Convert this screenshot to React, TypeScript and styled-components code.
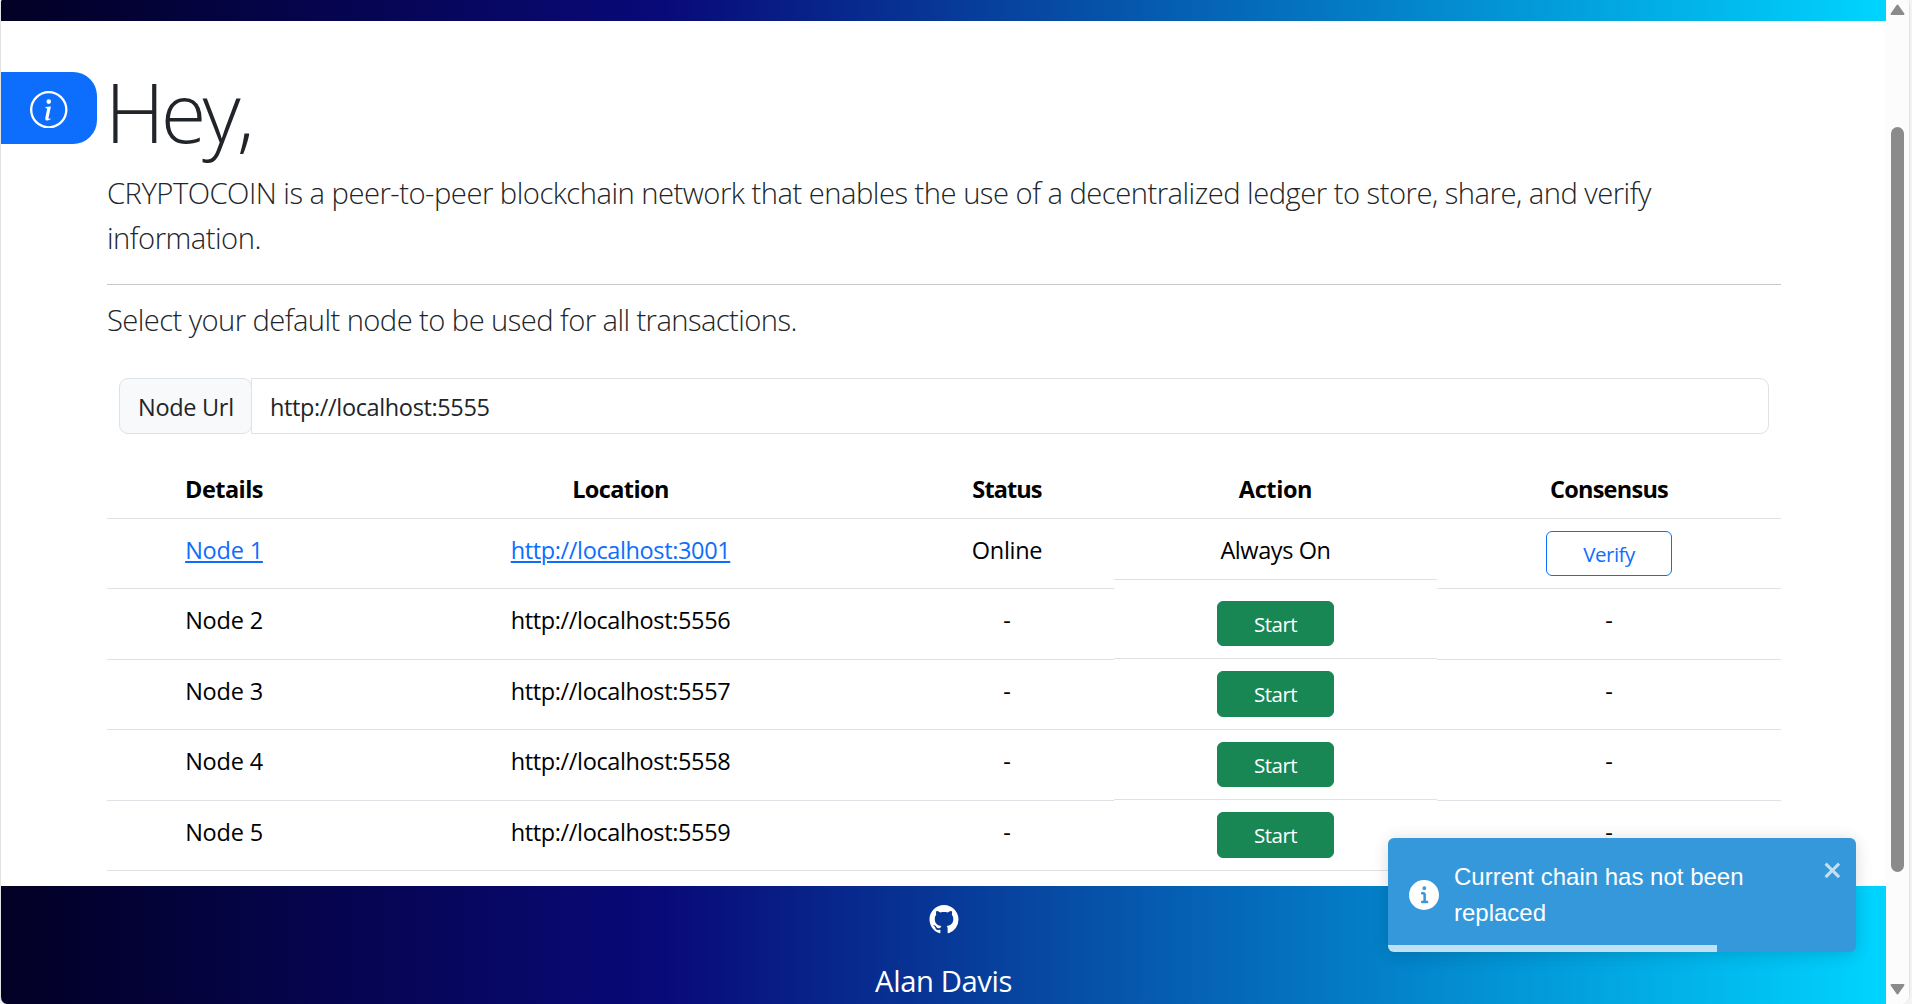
import React from "react";
import styled, { createGlobalStyle } from "styled-components";
import { BsGithub, BsInfoCircle } from "react-icons/bs";

const GlobalStyle = createGlobalStyle`
  *, *::before, *::after { box-sizing: border-box; }
  html, body { margin: 0; padding: 0; overflow: hidden; background: #f3f3f3; }
  body { font-family: "Open Sans", "Noto Sans", sans-serif; color: #212529; }
`;

const GRADIENT = "linear-gradient(90deg, #020024 0%, #090979 35%, #00d4ff 100%)";

const Window = styled.div`
  display: flex;
  width: 1910px;
  height: 1004px;
  overflow: hidden;
  border-left: 1px solid #e2e2e2;
  border-right: 1px solid #e2e2e2;
  border-radius: 2px 4px 9px 7px;
  background: #fff;
`;

const Page = styled.div`
  position: relative;
  display: flex;
  flex-direction: column;
  width: 1885px;
  height: 1004px;
`;

const TopBar = styled.header`
  flex: none;
  height: 21px;
  background: ${GRADIENT};
`;

const InfoButton = styled.button`
  position: absolute;
  left: 0;
  top: 72px;
  display: flex;
  align-items: center;
  width: 96px;
  height: 72px;
  padding: 3px 0 0 29px;
  border: 0;
  border-radius: 0 24px 24px 0;
  background: #0d6efd;
  color: #fff;
  font-size: 37.5px;
`;

const Main = styled.main`
  flex: none;
  display: flex;
  flex-direction: column;
  height: 865px;
  padding: 0 105px 0 106px;
`;

const Title = styled.h1`
  flex: none;
  margin: 39px 0 0 -2px;
  height: 111px;
  font-size: 83px;
  font-weight: 300;
  line-height: 102px;
  letter-spacing: -3.9px;
`;

const Lead = styled.p<{ $spacing: number }>`
  margin: 0;
  font-size: 29.2px;
  font-weight: 300;
  line-height: 45px;
  letter-spacing: ${(p) => p.$spacing}px;
`;

const Divider = styled.hr`
  flex: none;
  width: 100%;
  height: 1px;
  margin: 23px 0 13px;
  border: 0;
  background: #c7c8c9;
`;

const InputGroup = styled.label`
  display: flex;
  height: 56px;
  margin: 35px 12px 0;
  font-size: 23.5px;
  line-height: 36px;
`;

const InputLabel = styled.span`
  width: 133px;
  padding: 10px 0 8px 18px;
  border: 1px solid #dee2e6;
  border-radius: 9px;
  background: #f8f9fa;
  letter-spacing: -0.3px;
`;

const UrlInput = styled.input`
  flex: 1;
  min-width: 0;
  margin-left: -1px;
  padding: 2px 18px 0;
  border: 1px solid #dee2e6;
  border-radius: 0 9px 9px 0;
  outline: 0;
  background: #fff;
  color: #212529;
  font: inherit;
  letter-spacing: -0.37px;
`;

const Table = styled.div`
  display: flex;
  flex-direction: column;
  margin-top: 23.5px;
  color: #000;
  font-size: 23.5px;
  line-height: 36px;
  text-align: center;
`;

const Row = styled.div<{ $height: number }>`
  display: grid;
  grid-template-columns: 234px 559px 214px 323px 344px;
  align-items: start;
  height: ${(p) => p.$height}px;
`;

const Cell = styled.div<{ $height?: number; $spacing?: number }>`
  height: ${(p) => p.$height ?? 70.5}px;
  padding-top: 13.4px;
  border-bottom: 1px solid #dee2e6;
  letter-spacing: ${(p) => p.$spacing ?? -0.2}px;
`;

const HeadCell = styled(Cell)`
  height: 61px;
  font-weight: 700;
`;

const ButtonCell = styled(Cell)<{ $top: number }>`
  display: flex;
  justify-content: center;
  align-items: flex-start;
  padding-top: ${(p) => p.$top}px;
`;

const Link = styled.a`
  color: #0d6efd;
  text-decoration: underline;
  text-decoration-thickness: 2px;
  text-underline-offset: 2px;
`;

const ActionButton = styled.button<{ $outline?: boolean }>`
  width: ${(p) => (p.$outline ? 126 : 117)}px;
  height: 45.5px;
  padding: 2px 0 0;
  border: 1px solid ${(p) => (p.$outline ? "#0d6efd" : "#198754")};
  border-radius: 6px;
  background: ${(p) => (p.$outline ? "#fff" : "#198754")};
  color: ${(p) => (p.$outline ? "#0d6efd" : "#fff")};
  font-family: inherit;
  font-size: 20.5px;
  line-height: 31px;
  letter-spacing: -0.5px;
`;

const Footer = styled.footer`
  flex: none;
  display: flex;
  flex-direction: column;
  align-items: center;
  height: 118px;
  padding-top: 19px;
  background: ${GRADIENT};
  color: #fff;
  font-size: 30px;
`;

const Author = styled.span`
  margin-top: 25px;
  font-size: 29.2px;
  line-height: 45px;
  letter-spacing: -0.4px;
`;

const Scrollbar = styled.div`
  display: flex;
  flex-direction: column;
  align-items: center;
  width: 23px;
  height: 1004px;
  background: #fcfcfc;
`;

const Arrow = styled.svg<{ $gap: number }>`
  display: block;
  width: 15px;
  height: 12px;
  margin-top: ${(p) => p.$gap}px;
  fill: #8b8b8b;
  stroke: #8b8b8b;
  stroke-width: 2;
  stroke-linejoin: round;
`;

const Thumb = styled.div`
  width: 13px;
  height: 745px;
  margin-top: 111px;
  border-radius: 7px;
  background: #8b8b8b;
`;

const Toast = styled.div`
  position: absolute;
  left: 1387px;
  top: 838px;
  display: flex;
  width: 468px;
  height: 114px;
  padding: 20px 15px 0 21px;
  overflow: hidden;
  border-radius: 6px;
  background: #3498db;
  box-shadow: 0 1.5px 15px rgba(0, 0, 0, 0.1), 0 3px 22px rgba(0, 0, 0, 0.05);
  color: #fff;
`;

const ToastIcon = styled.svg`
  flex: none;
  width: 30px;
  height: 30px;
  margin-top: 22px;
  fill: currentColor;
`;

const ToastText = styled.div`
  width: 330px;
  margin: 1px 0 0 15px;
  font-family: "Liberation Sans", Arial, sans-serif;
  font-size: 24px;
  line-height: 36px;
`;

const CloseIcon = styled.svg`
  flex: none;
  width: 21px;
  height: 24px;
  margin-left: auto;
  margin-right: -3px;
  fill: #fff;
  opacity: 0.7;
`;

const Progress = styled.div`
  position: absolute;
  left: 0;
  bottom: 0;
  width: 329px;
  height: 7px;
  background: rgba(255, 255, 255, 0.7);
`;

const HEADINGS: { text: string; spacing: number }[] = [
  { text: "Details", spacing: -0.55 },
  { text: "Location", spacing: -0.6 },
  { text: "Status", spacing: -0.9 },
  { text: "Action", spacing: -0.4 },
  { text: "Consensus", spacing: -0.75 },
];

const OFFLINE_NODES = [
  { name: "Node 2", url: "http://localhost:5556" },
  { name: "Node 3", url: "http://localhost:5557" },
  { name: "Node 4", url: "http://localhost:5558" },
  { name: "Node 5", url: "http://localhost:5559" },
];

export default function App() {
  return (
    <>
      <GlobalStyle />
      <Window>
        <Page>
          <TopBar />
          <Main>
            <Title>Hey,</Title>
            <Lead $spacing={-0.51}>
              CRYPTOCOIN is a peer-to-peer blockchain network that enables the use of a decentralized
              ledger to store, share, and verify
              <br />
              information.
            </Lead>
            <Divider />
            <Lead $spacing={-0.58}>Select your default node to be used for all transactions.</Lead>
            <InputGroup>
              <InputLabel>Node Url</InputLabel>
              <UrlInput defaultValue="http://localhost:5555" />
            </InputGroup>
            <Table>
              <Row $height={61}>
                {HEADINGS.map((h) => (
                  <HeadCell key={h.text} $spacing={h.spacing}>
                    {h.text}
                  </HeadCell>
                ))}
              </Row>
              <Row $height={70.5}>
                <Cell>
                  <Link>Node 1</Link>
                </Cell>
                <Cell $spacing={-0.37}>
                  <Link>http://localhost:3001</Link>
                </Cell>
                <Cell $spacing={-0.3}>Online</Cell>
                <Cell $height={61} $spacing={-0.4}>
                  Always On
                </Cell>
                <ButtonCell $top={12}>
                  <ActionButton $outline>Verify</ActionButton>
                </ButtonCell>
              </Row>
              {OFFLINE_NODES.map((node) => (
                <Row key={node.name} $height={70.5}>
                  <Cell>{node.name}</Cell>
                  <Cell $spacing={-0.37}>{node.url}</Cell>
                  <Cell>-</Cell>
                  <ButtonCell $height={70} $top={11.5}>
                    <ActionButton>Start</ActionButton>
                  </ButtonCell>
                  <Cell>-</Cell>
                </Row>
              ))}
            </Table>
          </Main>
          <Footer>
            <BsGithub />
            <Author>Alan Davis</Author>
          </Footer>
          <InfoButton>
            <BsInfoCircle />
          </InfoButton>
          <Toast>
            <ToastIcon viewBox="0 0 24 24">
              <path d="M12 0a12 12 0 1012 12A12.013 12.013 0 0012 0zm.25 5a1.5 1.5 0 11-1.5 1.5 1.5 1.5 0 011.5-1.5zm2.25 13.5h-4a1 1 0 010-2h.75a.25.25 0 00.25-.25v-4.5a.25.25 0 00-.25-.25h-.75a1 1 0 010-2h1a2 2 0 012 2v4.75a.25.25 0 00.25.25h.75a1 1 0 110 2z" />
            </ToastIcon>
            <ToastText>Current chain has not been replaced</ToastText>
            <CloseIcon viewBox="0 0 14 16">
              <path
                fillRule="evenodd"
                d="M7.71 8.23l3.75 3.75-1.48 1.48-3.75-3.75-3.75 3.75L1 11.98l3.75-3.75L1 4.48 2.48 3l3.75 3.75L9.98 3l1.48 1.48-3.75 3.75z"
              />
            </CloseIcon>
            <Progress />
          </Toast>
        </Page>
        <Scrollbar>
          <Arrow $gap={4} viewBox="0 0 15 12">
            <path d="M7.5 1.5L13.5 10H1.5z" />
          </Arrow>
          <Thumb />
          <Arrow $gap={111} viewBox="0 0 15 12">
            <path d="M7.5 10.5L1.5 2H13.5z" />
          </Arrow>
        </Scrollbar>
      </Window>
    </>
  );
}
